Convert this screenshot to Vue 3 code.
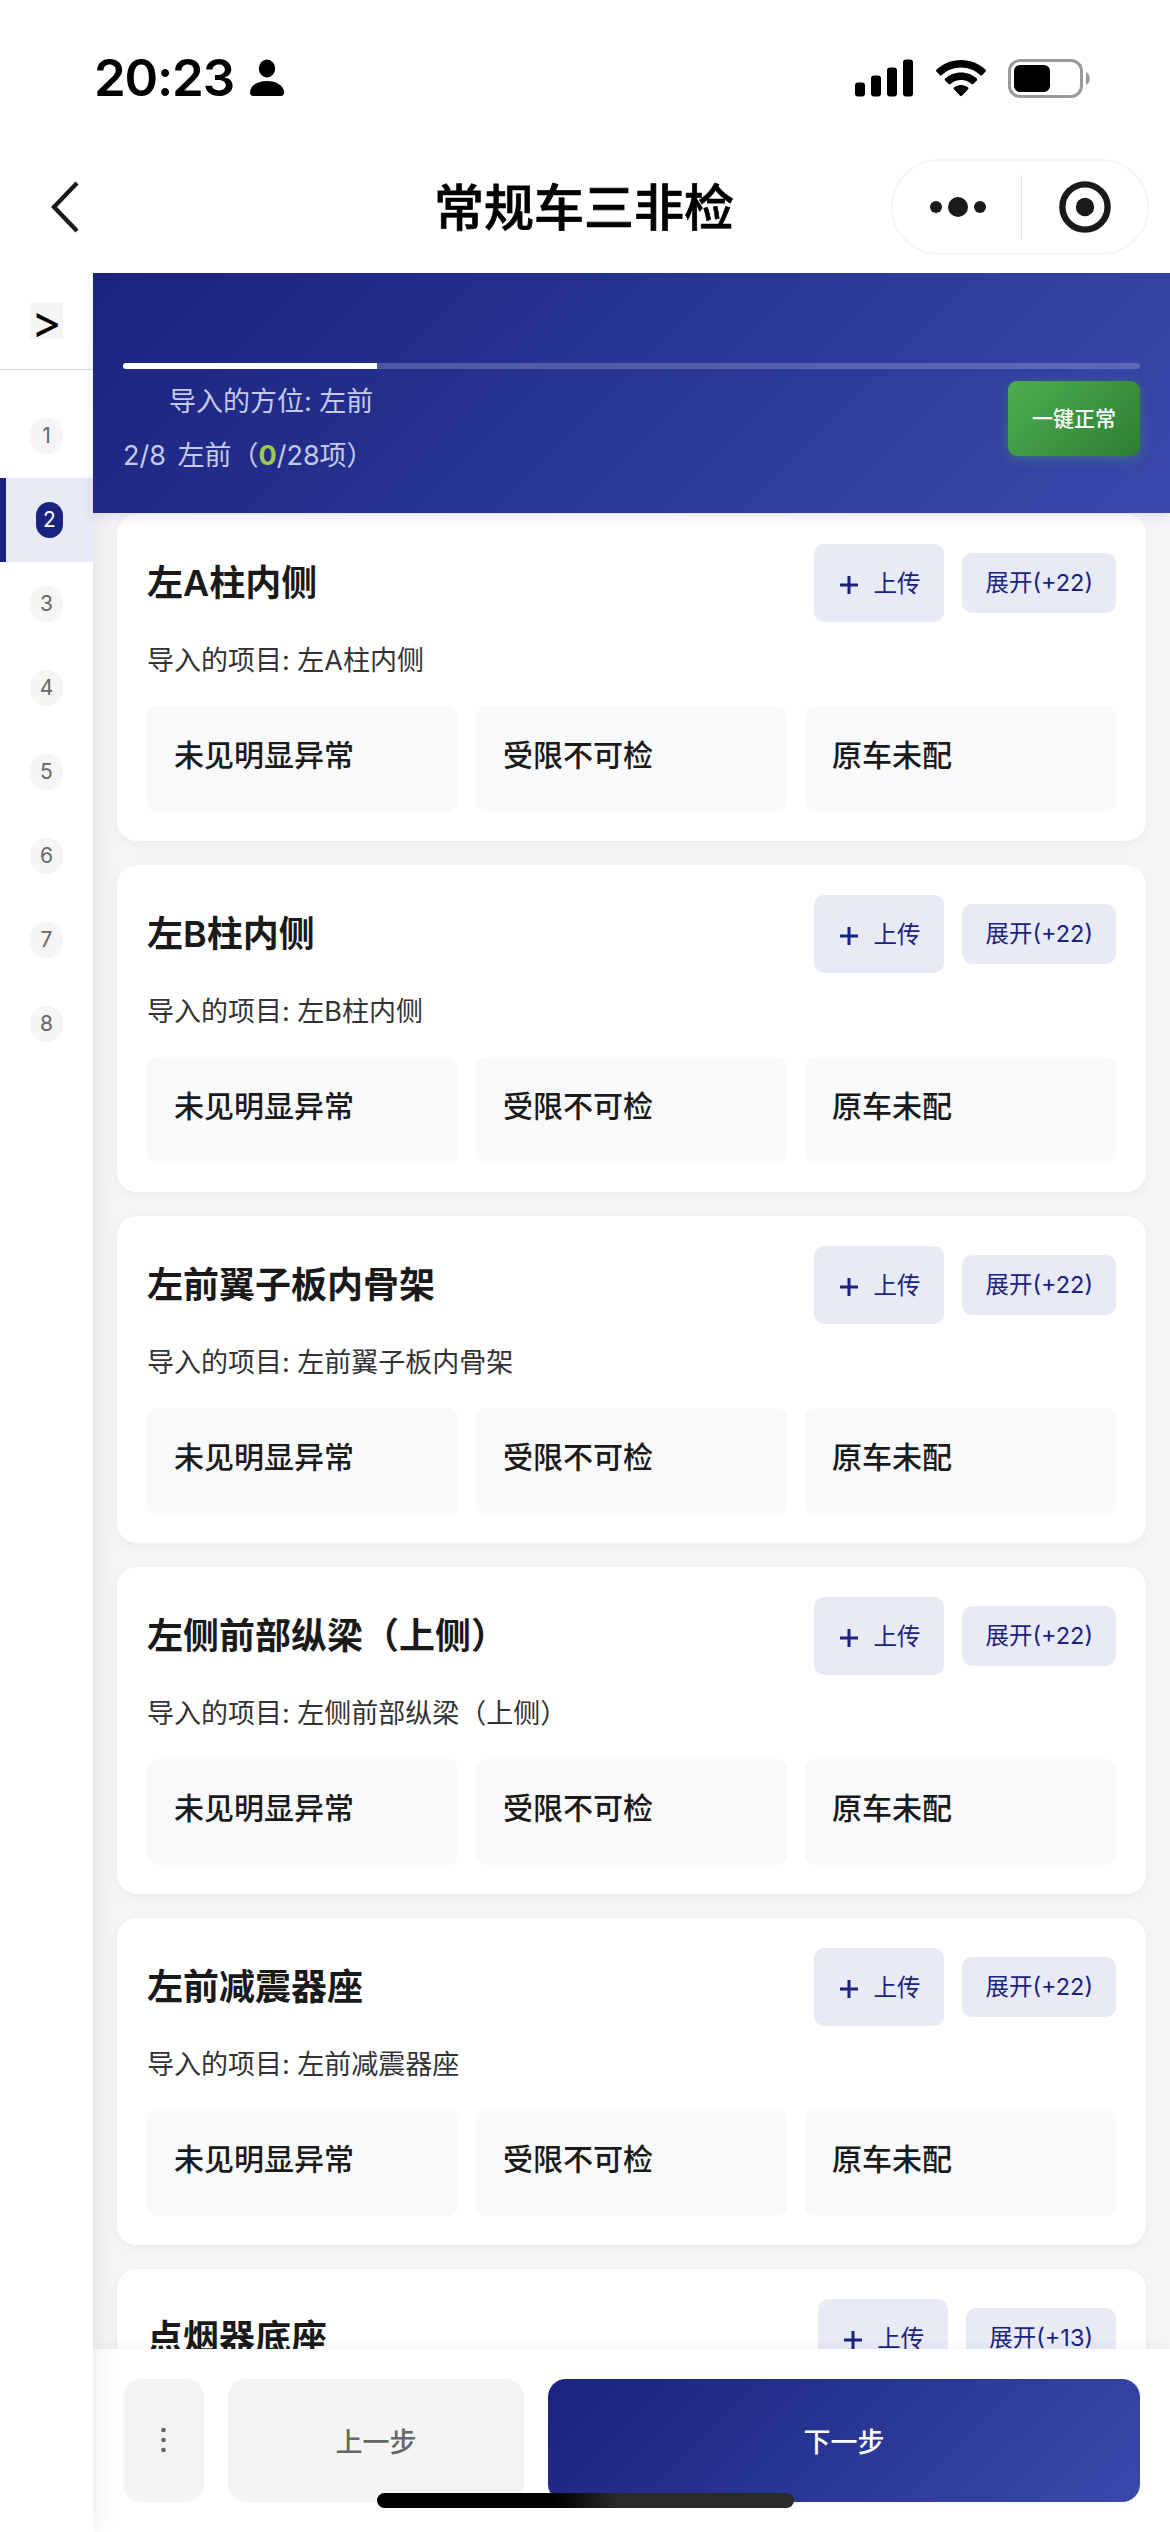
<template>
  <div class="page">
    <div class="status">
      <div class="status-left">
        <span class="time">20:23</span>
        <svg class="person" viewBox="0 0 34 38">
          <ellipse cx="17" cy="9.5" rx="8.2" ry="9" />
          <path d="M3 37C1 37 0 35.500 0 33.500C0 26.500 8 22 17 22S34 26.500 34 33.500C34 35.500 33 37 31 37Z" />
        </svg>
      </div>
      <div class="status-right">
        <svg class="signal" viewBox="0 0 58 38">
          <rect x="0" y="23.500" width="10" height="14" rx="3" />
          <rect x="16" y="16.500" width="10" height="21" rx="3" />
          <rect x="32" y="8.500" width="10" height="29" rx="3" />
          <rect x="48" y="0.500" width="10" height="37" rx="3" />
        </svg>
        <svg class="wifi" viewBox="0 0 50 37">
          <path d="M25 0C34.500 0 43.200 3.600 49.600 9.800C50.100 10.300 50.100 11 49.600 11.500L46 15.200C45.500 15.700 44.800 15.700 44.300 15.200C39.100 10.300 32.400 7.500 25 7.500S10.900 10.300 5.700 15.200C5.200 15.700 4.500 15.700 4 15.200L0.400 11.500C-0.100 11 -0.100 10.300 0.400 9.800C6.800 3.600 15.500 0 25 0Z" />
          <path d="M25 12.500C31.100 12.500 36.700 14.800 40.900 18.600C41.400 19.100 41.400 19.900 40.900 20.400L37.200 24.100C36.700 24.600 36 24.600 35.500 24.100C32.700 21.600 29 20.100 25 20.100S17.300 21.600 14.500 24.100C14 24.600 13.300 24.600 12.800 24.100L9.100 20.400C8.600 19.900 8.600 19.100 9.100 18.600C13.300 14.800 18.900 12.500 25 12.500Z" />
          <path d="M25 25C27.700 25 30.200 26 32.100 27.600C32.600 28.100 32.600 28.800 32.100 29.300L25.900 35.800C25.400 36.300 24.600 36.300 24.100 35.800L17.900 29.300C17.400 28.800 17.400 28.100 17.900 27.600C19.800 26 22.300 25 25 25Z" />
        </svg>
        <svg class="battery" viewBox="0 0 83 39">
          <rect x="1.500" y="1.500" width="72" height="36" rx="10.500" fill="none" stroke="#9a9a9a" stroke-width="3" />
          <rect x="6" y="6" width="36" height="27" rx="6" />
          <path d="M78 13C83 15 83 24 78 26Z" fill="#9a9a9a" />
        </svg>
      </div>
    </div>

    <div class="navbar">
      <svg class="back" viewBox="0 0 28 52">
        <path d="M26 2L3 26L26 50" fill="none" stroke="#1a1a1a" stroke-width="4.300" />
      </svg>
      <div class="nav-title">常规车三非检</div>
      <div class="capsule">
        <svg class="dots" viewBox="0 0 56 22">
          <circle cx="6" cy="11" r="6" />
          <circle cx="28" cy="11" r="10" />
          <circle cx="50" cy="11" r="6" />
        </svg>
        <div class="capsule-line"></div>
        <svg class="target" viewBox="0 0 52 52">
          <circle cx="26" cy="26" r="22.600" fill="none" stroke="#1a1a1a" stroke-width="6.400" />
          <circle cx="26" cy="26" r="9.200" />
        </svg>
      </div>
    </div>

    <div class="main">
      <div class="sidebar">
        <div class="toggle"><span class="toggle-icon">&gt;</span></div>
        <div class="steps">
          <div
            v-for="i in 8"
            :key="i"
            class="step"
            :class="{ active: i === current }"
            @click="current = i"
          >
            <span class="step-num">{{ i }}</span>
          </div>
        </div>
      </div>

      <div class="content">
        <div class="header">
          <div class="progress">
            <div class="progress-fill" :style="{ width: (current / 8) * 100 + '%' }"></div>
          </div>
          <div class="header-row">
            <div class="header-info">
              <div class="direction">导入的方位: 左前</div>
              <div class="count">{{ current }}/8 左前（<span class="done">0</span>/28项）</div>
            </div>
            <div class="all-ok">一键正常</div>
          </div>
        </div>

        <div class="list">
          <div v-for="item in items" :key="item.name" class="card">
            <div class="card-head">
              <div class="card-title">{{ item.name }}</div>
              <div class="upload">
                <svg class="plus" viewBox="0 0 18 18">
                  <path d="M9 0V18M0 9H18" stroke="#1a237e" stroke-width="3" />
                </svg>
                <span>上传</span>
              </div>
              <div class="expand">展开(+{{ item.more }})</div>
            </div>
            <div class="card-sub">导入的项目: {{ item.name }}</div>
            <div class="options">
              <div v-for="o in options" :key="o" class="option">{{ o }}</div>
            </div>
          </div>
        </div>

        <div class="footer">
          <div class="btn more">
            <svg class="more-icon" viewBox="0 0 5 27">
              <circle cx="2.500" cy="3" r="2.300" />
              <circle cx="2.500" cy="13" r="2.300" />
              <circle cx="2.500" cy="23" r="2.300" />
            </svg>
          </div>
          <div class="btn prev">上一步</div>
          <div class="btn next">下一步</div>
        </div>
      </div>
    </div>
    <div class="home-bar"></div>
  </div>
</template>

<script setup>
import { ref } from 'vue'

const current = ref(2)

const options = ['未见明显异常', '受限不可检', '原车未配']

const items = [
  { name: '左A柱内侧', more: 22 },
  { name: '左B柱内侧', more: 22 },
  { name: '左前翼子板内骨架', more: 22 },
  { name: '左侧前部纵梁（上侧）', more: 22 },
  { name: '左前减震器座', more: 22 },
  { name: '点烟器底座', more: 13 },
]
</script>

<style>
body {
  margin: 0;
  background: #fff;
}
</style>

<style scoped>
.page {
  position: relative;
  display: flex;
  flex-direction: column;
  width: 1170px;
  height: 2532px;
  overflow: hidden;
  background: #fff;
  color: #1a1a1a;
  font-family: Inter, "Noto Sans CJK SC", sans-serif;
  white-space: nowrap;
}
.page * {
  box-sizing: border-box;
}
svg {
  display: block;
  flex: none;
}

/* status bar */
.status {
  display: flex;
  justify-content: space-between;
  align-items: center;
  height: 156px;
  padding: 0 79px 0 94px;
}
.status-left,
.status-right {
  display: flex;
  align-items: center;
}
.time {
  font-size: 51px;
  font-weight: 600;
  line-height: 60px;
  letter-spacing: -1.2px;
  color: #000;
}
.person {
  width: 34px;
  height: 38px;
  margin-left: 16px;
}
.signal {
  width: 58px;
  height: 38px;
}
.wifi {
  width: 50px;
  height: 37px;
  margin-left: 23px;
}
.battery {
  width: 83px;
  height: 39px;
  margin-left: 22px;
}

/* navigation bar */
.navbar {
  display: flex;
  align-items: center;
  justify-content: space-between;
  height: 117px;
  padding: 0 21px 15px 51px;
}
.back {
  width: 28px;
  height: 52px;
  margin-right: 198px;
}
.nav-title {
  padding-top: 2px;
  font-size: 50px;
  font-weight: 500;
  line-height: 72px;
  color: #000;
  -webkit-text-stroke: 0.7px #000;
}
.capsule {
  display: flex;
  align-items: center;
  width: 258px;
  height: 96px;
  padding-left: 37px;
  border: 2px solid #f5f5f5;
  border-radius: 48px;
}
.dots {
  width: 56px;
  height: 22px;
  fill: #1a1a1a;
}
.capsule-line {
  width: 1px;
  height: 64px;
  margin: 0 37px 0 35px;
  background: #e2e2e2;
}
.target {
  width: 52px;
  height: 52px;
  fill: #1a1a1a;
}

/* sidebar */
.main {
  display: flex;
  flex: 1;
  min-height: 0;
  overflow: hidden;
}
.sidebar {
  position: relative;
  z-index: 1;
  width: 93px;
  background: #fff;
  box-shadow: 3px 0 24px rgba(0, 0, 0, 0.08);
}
.toggle {
  display: flex;
  align-items: center;
  justify-content: center;
  height: 97px;
  border-bottom: 1px solid #dcdcdc;
}
.toggle-icon {
  display: flex;
  align-items: center;
  justify-content: center;
  width: 33px;
  height: 36px;
  margin-top: -1px;
  background: #f5f5f5;
  color: #000;
  font-size: 46px;
  line-height: 36px;
}
.steps {
  padding-top: 24px;
}
.step {
  display: flex;
  align-items: center;
  justify-content: center;
  height: 84px;
}
.step-num {
  width: 33px;
  height: 36px;
  border-radius: 18px;
  background: #f5f5f5;
  color: #666;
  font-size: 21px;
  line-height: 36px;
  text-align: center;
}
.active {
  border-left: 6px solid #1a237e;
  background: #e8eaf6;
}
.active .step-num {
  width: 27px;
  border-radius: 13.5px;
  background: #1a237e;
  color: #fff;
}

/* header */
.content {
  display: flex;
  flex-direction: column;
  flex: 1;
  min-width: 0;
  background: #f5f6f8;
}
.header {
  position: relative;
  z-index: 2;
  height: 240px;
  padding: 90px 30px 0;
  background: linear-gradient(135deg, #1a237e, #3949ab);
  box-shadow: 0 4px 12px rgba(26, 35, 126, 0.1);
}
.progress {
  height: 6px;
  border-radius: 3px;
  overflow: hidden;
  background: rgba(255, 255, 255, 0.2);
}
.progress-fill {
  height: 100%;
  background: #fff;
}
.header-row {
  display: flex;
  justify-content: space-between;
  padding-top: 12px;
}
.header-info {
  padding-top: 1px;
  color: #c5cae9;
  font-size: 27px;
}
.direction {
  padding-left: 46px;
  line-height: 40px;
}
.count {
  margin-top: 14px;
  line-height: 40px;
  word-spacing: 4px;
}
.done {
  color: #9ccc4a;
  font-weight: 700;
}
.all-ok {
  width: 132px;
  height: 75px;
  border-radius: 9px;
  background: linear-gradient(135deg, #4caf50, #2e7d32);
  box-shadow: 0 3px 12px rgba(76, 175, 80, 0.35);
  color: #fff;
  font-size: 21px;
  font-weight: 500;
  line-height: 75px;
  text-align: center;
}

/* cards */
.list {
  flex: 1;
  min-height: 0;
  padding: 1px 24px 0;
  overflow: hidden;
}
.card {
  height: 327px;
  margin-bottom: 24px;
  padding: 30px;
  border-radius: 20px;
  background: #fff;
  box-shadow: 0 3px 12px rgba(0, 0, 0, 0.05);
}
.card-head {
  display: flex;
  align-items: center;
  height: 78px;
}
.card-title {
  flex: 1;
  font-size: 36px;
  font-weight: 600;
  line-height: 54px;
}
.upload {
  display: flex;
  align-items: center;
  justify-content: space-between;
  width: 130px;
  height: 78px;
  padding: 0 24px 2px 26px;
  border-radius: 10px;
  background: #e8eaf6;
  color: #1a237e;
  font-size: 23.5px;
}
.plus {
  width: 18px;
  height: 18px;
  margin-top: 5px;
}
.expand {
  height: 60px;
  margin-left: 18px;
  padding: 0 23px;
  border-radius: 10px;
  background: #e8eaf6;
  color: #1a237e;
  font-size: 23.5px;
  line-height: 60px;
}
.card-sub {
  margin-top: 18px;
  color: #333;
  font-size: 27px;
  line-height: 42px;
}
.options {
  display: grid;
  grid-template-columns: repeat(3, 1fr);
  gap: 18px;
  margin-top: 24px;
}
.option {
  height: 106px;
  padding-left: 27px;
  border-radius: 10px;
  background: #f8f9fa;
  font-size: 30px;
  font-weight: 500;
  line-height: 98px;
}

/* footer */
.footer {
  position: relative;
  display: flex;
  gap: 24px;
  height: 183px;
  padding: 30px 30px 0;
  background: #fff;
  box-shadow: 0 -3px 12px rgba(0, 0, 0, 0.04);
}
.btn {
  display: flex;
  align-items: center;
  justify-content: center;
  height: 123px;
  padding-bottom: 1px;
  border-radius: 18px;
  background: #f4f4f5;
  color: #666;
  font-size: 27px;
  font-weight: 500;
}
.more {
  width: 81px;
}
.more-icon {
  width: 5px;
  height: 27px;
  fill: #666;
}
.prev {
  flex: 1;
}
.next {
  flex: 2;
  background: linear-gradient(135deg, #1a237e, #3949ab);
  color: #fff;
}
.home-bar {
  position: absolute;
  z-index: 3;
  left: 377px;
  bottom: 24px;
  width: 417px;
  height: 15px;
  border-radius: 8px;
  background: linear-gradient(90deg, #000 42%, #2a2a2a 58%);
}
</style>
